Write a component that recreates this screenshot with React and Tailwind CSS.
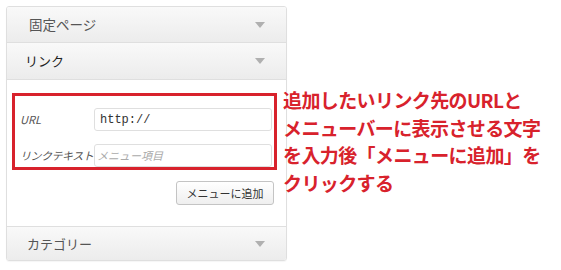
export default function App() {
  const jp = "font-['Noto_Sans_CJK_JP','Noto_Sans',sans-serif]";

  const Caret = () => (
    <svg width="10" height="6" viewBox="0 0 10 6">
      <path d="M0 0 L10 0 L5 6 Z" fill="#b0b0b0" />
    </svg>
  );

  return (
    <div className={`relative w-[561px] h-[270px] bg-white ${jp}`}>
      <div className="pt-[6px] pl-[6px]">
        <div className="w-[281px] border border-[#dfdfdf] rounded-[3px] shadow-[0_1px_1px_rgba(0,0,0,0.04)] overflow-hidden">
          <div className="h-[36px] flex items-center justify-between pl-[22px] pr-[21px] bg-gradient-to-b from-[#f9f9f9] to-[#ececec] border-b border-[#dfdfdf]">
            <span className="text-[13.5px] text-[#555]">固定ページ</span>
            <Caret />
          </div>
          <div className="h-[37px] flex items-center justify-between pl-[18px] pr-[21px] bg-gradient-to-b from-[#f9f9f9] to-[#ececec] border-b border-[#dfdfdf]">
            <span className="text-[13px] text-[#222]">リンク</span>
            <Caret />
          </div>
          <div className="bg-white pt-[13px] pb-[21px] border-b border-[#dfdfdf]">
            <div className="ml-[5px] w-[265px] h-[77px] border-[3px] border-[#d8222c] pl-[5px] pr-[2px] pt-[12px]">
              <div className="flex items-center h-[23px]">
                <span className="w-[74px] text-[11px] italic text-[#555]">URL</span>
                <div className="flex-1 h-[23px] border border-[#dfdfdf] rounded-[3px] flex items-center pl-[5px] font-['Liberation_Mono',monospace] text-[12px] text-[#333]">
                  http://
                </div>
              </div>
              <div className="flex items-center h-[23px] mt-[13px]">
                <span className="w-[74px] text-[11px] italic text-[#555] whitespace-nowrap tracking-[-0.5px]">リンクテキスト</span>
                <div className="flex-1 h-[23px] border border-[#dfdfdf] rounded-[3px] flex items-center pl-[2px] text-[11px] italic text-[#aaa]">
                  メニュー項目
                </div>
              </div>
            </div>
            <div className="flex justify-end pr-[12px] mt-[11px]">
              <div className="w-[98px] h-[24px] border border-[#c4c4c4] rounded-[3px] bg-gradient-to-b from-white to-[#efefef] flex items-center justify-center text-[11px] text-[#333]">
                メニューに追加
              </div>
            </div>
          </div>
          <div className="h-[33px] flex items-center justify-between pl-[20px] pr-[21px] bg-gradient-to-b from-[#f9f9f9] to-[#ececec]">
            <span className="text-[13px] text-[#555]">カテゴリー</span>
            <Caret />
          </div>
        </div>
      </div>

      <div className="absolute left-[283px] top-[86px] text-[#d8222c] font-bold text-[19px] leading-[27.5px] tracking-[-0.6px]">
        <div>追加したいリンク先のURLと</div>
        <div>メニューバーに表示させる文字</div>
        <div>を入力後「メニューに追加」を</div>
        <div>クリックする</div>
      </div>
    </div>
  );
}
